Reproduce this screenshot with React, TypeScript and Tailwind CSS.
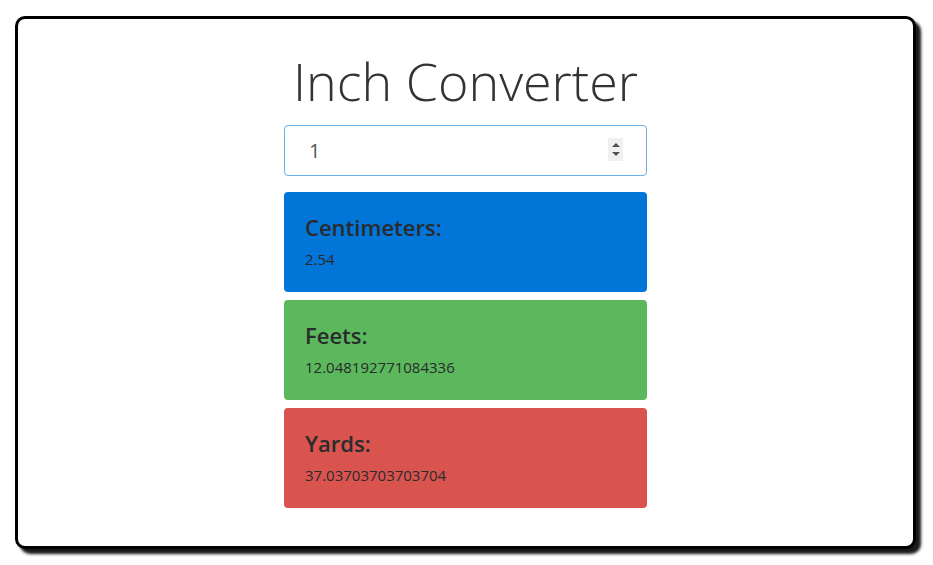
import React from 'react';

const results = [
  { label: 'Centimeters:', value: '2.54', bg: 'bg-[#0275d8]' },
  { label: 'Feets:', value: '12.048192771084336', bg: 'bg-[#5cb85c]' },
  { label: 'Yards:', value: '37.03703703703704', bg: 'bg-[#d9534f]' },
];

export default function App() {
  const [inches, setInches] = React.useState('1');

  return (
    <div className="h-[565px] w-[933px] bg-white pl-[15px] pt-4 font-['Open_Sans',sans-serif]">
      <div className="h-[533px] w-[901px] rounded-[10px] border-[3px] border-black bg-white shadow-[5px_5px_3px_rgba(0,0,0,0.9)]">
        <div className="mx-auto flex w-[363px] flex-col pt-[31px]">
          <h1 className="-mx-10 mb-[13px] whitespace-nowrap text-center text-[52px] font-light leading-[1.2] text-[#333]">
            Inch Converter
          </h1>
          <div className="relative">
            <input
              type="text"
              inputMode="numeric"
              value={inches}
              onChange={(e) => setInches(e.target.value)}
              className="h-[51px] w-full rounded-[4px] border border-[#66afe9] px-[24px] text-[20px] text-[#555] outline-none"
            />
            <div className="absolute right-[24px] top-[13px] flex h-[23px] w-[15px] flex-col items-center justify-center gap-[5px] bg-[#f0f0f0]">
              <span className="h-0 w-0 border-x-[4px] border-b-[4px] border-x-transparent border-b-[#505050]" />
              <span className="h-0 w-0 border-x-[4px] border-t-[4px] border-x-transparent border-t-[#505050]" />
            </div>
          </div>
          <div className="mt-4 flex flex-col gap-2">
            {results.map((r) => (
              <div key={r.label} className={`h-[100px] rounded-[4px] px-[21px] pt-[22px] text-[#292b2c] ${r.bg}`}>
                <h4 className="text-[22px] font-semibold leading-[1.2]">{r.label}</h4>
                <p className="mt-[8px] text-[15px] leading-[1.4]">{r.value}</p>
              </div>
            ))}
          </div>
        </div>
      </div>
    </div>
  );
}
